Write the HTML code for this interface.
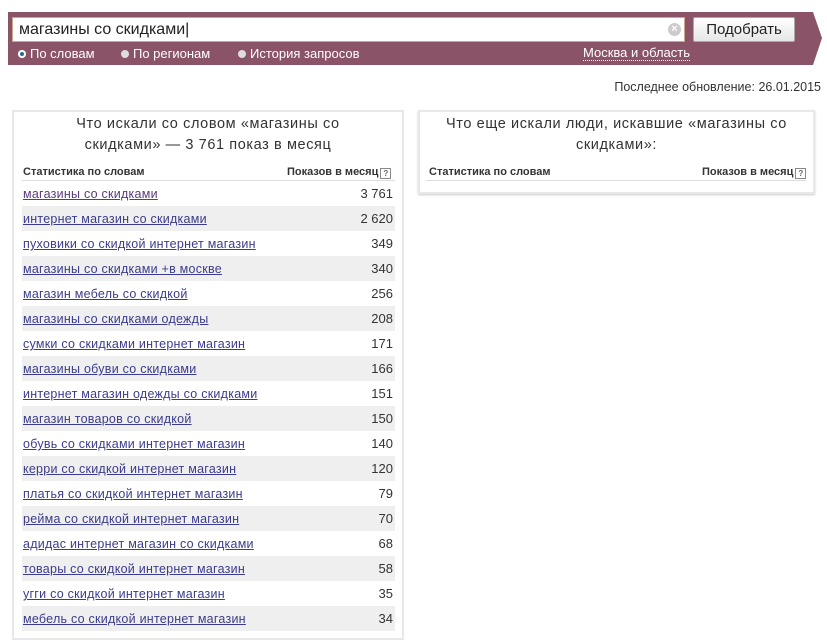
<!DOCTYPE html>
<html><head><meta charset="utf-8"><style>
body{margin:0;width:827px;height:633px;background:#fff;font-family:"Liberation Sans",Arial,sans-serif;position:relative;overflow:hidden;color:#222}
.band{position:absolute;left:8px;top:12px;width:814px;height:53px;background:#8b5367;clip-path:polygon(0 0,805px 0,814px 26px,805px 53px,0 53px)}
.inp{position:absolute;left:12px;top:17px;width:673px;height:25px;background:#fff;border:1px solid #c9a98a;box-sizing:border-box;font-size:16px;line-height:24px;padding-left:6px;color:#222}
.clr{position:absolute;left:668px;top:23px;width:13px;height:13px;border-radius:50%;background:#ccc;color:#fff;font-size:11px;line-height:13px;text-align:center;font-weight:bold}
.btn{position:absolute;left:693px;top:17px;width:102px;height:25px;background:linear-gradient(#fff,#e6e6e6);border:1px solid #aaa;box-sizing:border-box;border-radius:2px;font-size:15px;text-align:center;line-height:23px;color:#222}
.radios{position:absolute;top:46px;left:18px;font-size:13px;color:#fff}
.radios span{position:absolute;white-space:nowrap}
.dot{display:inline-block;width:8px;height:8px;border-radius:50%;background:#ddd;margin-right:4px;vertical-align:0px}
.msk{position:absolute;left:583px;top:46px;font-size:13px;color:#fff;border-bottom:1px dotted #fff;line-height:14px}
.upd{position:absolute;right:6px;top:80px;font-size:12.5px;color:#333}
.panel{position:absolute;border:2px solid #e8e8e8;box-sizing:border-box;background:#fff}
.ttl{text-align:center;font-size:14.5px;line-height:21px;color:#333;letter-spacing:.6px}
.hd{position:absolute;font-size:11px;font-weight:bold;color:#333}
.row{position:absolute;left:22px;width:373px;height:25px;font-size:12.5px;line-height:26px;letter-spacing:.25px}
.row a{color:#3c3c8c;text-decoration:underline;position:absolute;left:1px;white-space:nowrap}
.row b{position:absolute;right:2px;font-weight:normal;color:#333;font-size:13px;letter-spacing:0}
.g{background:#efefef}
.q{display:inline-block;width:9px;height:9px;border:1px solid #888;font-size:8px;line-height:9px;text-align:center;color:#666;margin-left:2px;vertical-align:-1px}
</style></head><body>
<div class="band"></div>
<div class="inp">магазины со скидками|</div>
<div class="clr">×</div>
<div class="btn">Подобрать</div>
<div class="radios"><span style="left:0"><i class="dot" style="background:#fff;box-shadow:inset 0 0 0 2px #fff,inset 0 0 0 4px #2a6a8a"></i>По словам</span><span style="left:103px"><i class="dot"></i>По регионам</span><span style="left:220px"><i class="dot"></i>История запросов</span></div>
<div class="msk">Москва и область</div>
<div class="upd">Последнее обновление: 26.01.2015</div>
<div class="panel" style="left:12px;top:110px;width:392px;height:530px">
<div class="ttl" style="margin-top:2px">Что искали со словом «магазины со<br>скидками» — 3 761 показ в месяц</div>
</div>
<div class="hd" style="left:23px;top:166px">Статистика по словам</div>
<div class="hd" style="left:287px;top:166px">Показов в месяц<span class="q">?</span></div>
<div style="position:absolute;left:22px;top:180px;width:373px;border-top:1px solid #ddd"></div>
<div class="panel" style="left:418px;top:110px;width:397px;height:84px;box-shadow:0 1px 2px #ccc">
<div class="ttl" style="margin-top:2px">Что еще искали люди, искавшие «магазины со<br>скидками»:</div>
</div>
<div class="hd" style="left:429px;top:166px">Статистика по словам</div>
<div class="hd" style="left:702px;top:166px">Показов в месяц<span class="q">?</span></div>
<div style="position:absolute;left:426px;top:180px;width:380px;border-top:1px solid #ddd"></div>
<div class="row" style="top:181px"><a style="color:#5a3a7a">магазины со скидками</a><b>3 761</b></div>
<div class="row g" style="top:206px"><a>интернет магазин со скидками</a><b>2 620</b></div>
<div class="row" style="top:231px"><a>пуховики со скидкой интернет магазин</a><b>349</b></div>
<div class="row g" style="top:256px"><a>магазины со скидками +в москве</a><b>340</b></div>
<div class="row" style="top:281px"><a>магазин мебель со скидкой</a><b>256</b></div>
<div class="row g" style="top:306px"><a>магазины со скидками одежды</a><b>208</b></div>
<div class="row" style="top:331px"><a>сумки со скидками интернет магазин</a><b>171</b></div>
<div class="row g" style="top:356px"><a>магазины обуви со скидками</a><b>166</b></div>
<div class="row" style="top:381px"><a>интернет магазин одежды со скидками</a><b>151</b></div>
<div class="row g" style="top:406px"><a>магазин товаров со скидкой</a><b>150</b></div>
<div class="row" style="top:431px"><a>обувь со скидками интернет магазин</a><b>140</b></div>
<div class="row g" style="top:456px"><a>керри со скидкой интернет магазин</a><b>120</b></div>
<div class="row" style="top:481px"><a>платья со скидкой интернет магазин</a><b>79</b></div>
<div class="row g" style="top:506px"><a>рейма со скидкой интернет магазин</a><b>70</b></div>
<div class="row" style="top:531px"><a>адидас интернет магазин со скидками</a><b>68</b></div>
<div class="row g" style="top:556px"><a>товары со скидкой интернет магазин</a><b>58</b></div>
<div class="row" style="top:581px"><a>угги со скидкой интернет магазин</a><b>35</b></div>
<div class="row g" style="top:606px"><a>мебель со скидкой интернет магазин</a><b>34</b></div>
</body></html>
